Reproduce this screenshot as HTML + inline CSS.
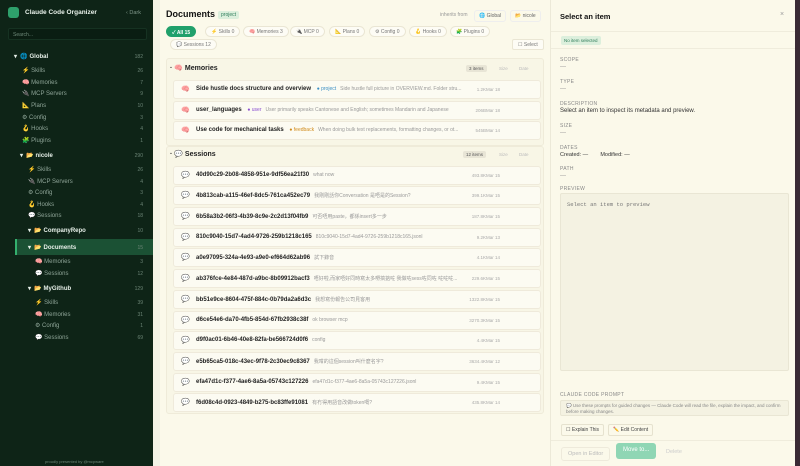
<!DOCTYPE html>
<html><head><meta charset="utf-8">
<style>
*{box-sizing:border-box;margin:0;padding:0}
body{width:800px;height:466px;overflow:hidden;background:#fbf9ea;font-family:"Liberation Sans","Noto Sans CJK SC",sans-serif;position:relative;color:#222}
.abs{position:absolute;white-space:nowrap}
#side{position:absolute;left:0;top:0;width:153px;height:466px;background:#0e2417}
#gap{position:absolute;left:153px;top:0;width:7px;height:466px;background:#f3f2e6}
.si{position:absolute;font-size:6px;color:#8fa598;white-space:nowrap}
.sc{position:absolute;right:10px;font-size:5px;color:#6c8576}
.sb{color:#e6efe8;font-weight:bold}
.row{position:absolute;left:173px;width:368px;height:19px;border:1px solid #efeadb;background:#fcfbf2;border-radius:3px}
.row .t{position:absolute;left:22px;top:5px;font-size:6px;font-weight:bold;color:#222;white-space:nowrap}
.row .i{position:absolute;left:7px;top:4px;font-size:7px;color:#888}
.row .m{position:absolute;right:54px;top:6px;font-size:4.5px;color:#aaa}
.row .d{position:absolute;right:40px;top:6px;font-size:4.5px;color:#aaa}
.d2{color:#999;font-weight:normal;font-size:5px;margin-left:4px}
.chip{position:absolute;top:26px;height:11px;border:1px solid #eae6d4;border-radius:6px;background:#fdfcf5;font-size:5px;color:#777;padding:2px 5px;white-space:nowrap}
.lab{position:absolute;left:560px;font-size:5px;color:#888;letter-spacing:.3px}
.val{position:absolute;left:560px;font-size:6px;color:#333}
</style></head><body>
<div id="side">
 <div class="abs" style="left:8px;top:7px;width:11px;height:11px;background:#2ea06b;border-radius:3px"></div>
 <div class="abs" style="left:25px;top:9px;font-size:6.5px;color:#e8f1ea;font-weight:bold">Claude Code Organizer</div>
 <div class="abs" style="left:126px;top:10px;font-size:5.5px;color:#7f978a">‹ Dark</div>
 <div class="abs" style="left:8px;top:28px;width:139px;height:12px;background:#0a1d12;border:1px solid #163222;border-radius:2px;font-size:5px;color:#6f8a7a;padding:3px 4px">Search...</div>
 <div class="si sb" style="left:14px;top:53px">▾ &nbsp;🌐 Global</div><div class="sc" style="top:54px">182</div>
 <div class="si" style="left:22px;top:67px">⚡ Skills</div><div class="sc" style="top:68px">26</div>
 <div class="si" style="left:22px;top:79px">🧠 Memories</div><div class="sc" style="top:80px">7</div>
 <div class="si" style="left:22px;top:90px">🔌 MCP Servers</div><div class="sc" style="top:91px">9</div>
 <div class="si" style="left:22px;top:102px">📐 Plans</div><div class="sc" style="top:103px">10</div>
 <div class="si" style="left:22px;top:114px">⚙ Config</div><div class="sc" style="top:115px">3</div>
 <div class="si" style="left:22px;top:125px">🪝 Hooks</div><div class="sc" style="top:126px">4</div>
 <div class="si" style="left:22px;top:137px">🧩 Plugins</div><div class="sc" style="top:138px">1</div>
 <div class="si sb" style="left:20px;top:152px">▾ &nbsp;📂 nicole</div><div class="sc" style="top:153px">290</div>
 <div class="si" style="left:28px;top:166px">⚡ Skills</div><div class="sc" style="top:167px">26</div>
 <div class="si" style="left:28px;top:178px">🔌 MCP Servers</div><div class="sc" style="top:179px">4</div>
 <div class="si" style="left:28px;top:189px">⚙ Config</div><div class="sc" style="top:190px">3</div>
 <div class="si" style="left:28px;top:201px">🪝 Hooks</div><div class="sc" style="top:202px">4</div>
 <div class="si" style="left:28px;top:212px">💬 Sessions</div><div class="sc" style="top:213px">18</div>
 <div class="si sb" style="left:28px;top:227px">▾ &nbsp;📂 CompanyRepo</div><div class="sc" style="top:228px">10</div>
 <div class="abs" style="left:15px;top:239px;width:138px;height:16px;background:#1b5134;border-left:2px solid #34b06e"></div>
 <div class="si sb" style="left:28px;top:244px">▾ &nbsp;📂 Documents</div><div class="sc" style="top:245px">15</div>
 <div class="si" style="left:35px;top:258px">🧠 Memories</div><div class="sc" style="top:259px">3</div>
 <div class="si" style="left:35px;top:270px">💬 Sessions</div><div class="sc" style="top:271px">12</div>
 <div class="si sb" style="left:28px;top:285px">▾ &nbsp;📂 MyGithub</div><div class="sc" style="top:286px">129</div>
 <div class="si" style="left:35px;top:299px">⚡ Skills</div><div class="sc" style="top:300px">39</div>
 <div class="si" style="left:35px;top:311px">🧠 Memories</div><div class="sc" style="top:312px">31</div>
 <div class="si" style="left:35px;top:322px">⚙ Config</div><div class="sc" style="top:323px">1</div>
 <div class="si" style="left:35px;top:334px">💬 Sessions</div><div class="sc" style="top:335px">69</div>
 <div class="abs" style="left:45px;top:459px;font-size:4px;color:#6c8576">proudly presented by @mcpware</div>
</div>
<div id="gap"></div>

<div class="abs" style="left:166px;top:9px;font-size:9px;font-weight:bold;color:#111">Documents</div>
<div class="abs" style="left:218px;top:11px;font-size:5px;color:#2f7d5a;background:#dcefdc;padding:1px 3px;border-radius:2px">project</div>
<div class="abs" style="left:440px;top:12px;font-size:5px;color:#999">inherits from</div>
<div class="abs" style="left:474px;top:10px;font-size:5px;color:#666;border:1px solid #eee;padding:2px 4px;border-radius:3px">🌐 Global</div>
<div class="abs" style="left:510px;top:10px;font-size:5px;color:#666;border:1px solid #eee;padding:2px 4px;border-radius:3px">📂 nicole</div>
<div class="chip" style="left:166px;background:#20a06b;color:#fff;border-color:#20a06b;font-weight:bold">✓ All 15</div>
<div class="chip" style="left:205px">⚡ Skills 0</div>
<div class="chip" style="left:243px">🧠 Memories 3</div>
<div class="chip" style="left:290px">🔌 MCP 0</div>
<div class="chip" style="left:329px">📐 Plans 0</div>
<div class="chip" style="left:369px">⚙ Config 0</div>
<div class="chip" style="left:409px">🪝 Hooks 0</div>
<div class="chip" style="left:450px">🧩 Plugins 0</div>
<div class="chip" style="left:170px;top:39px">💬 Sessions 12</div>
<div class="chip" style="left:512px;top:39px;border-radius:2px">☐ Select</div>

<div class="abs" style="left:166px;top:58px;width:378px;height:88px;background:#f8f6e6;border:1px solid #efebd9;border-radius:3px"></div>
<div class="abs" style="left:170px;top:64px;font-size:7px;font-weight:bold">· 🧠 Memories</div>
<div class="abs" style="left:466px;top:65px;font-size:4.5px;color:#555;background:#e8e5d6;padding:1px 3px;border-radius:2px">3 items</div>
<div class="abs" style="left:499px;top:66px;font-size:4.5px;color:#bbb">Size</div>
<div class="abs" style="left:519px;top:66px;font-size:4.5px;color:#bbb">Date</div>
<div class="row" style="top:80px"><span class="i">🧠</span><span class="t">Side hustle docs structure and overview <span class="d2" style="color:#3a8fc4">● project</span><span class="d2">Side hustle full picture in OVERVIEW.md. Folder stru...</span></span><span class="m">1.2K</span><span class="d">Mar 18</span></div>
<div class="row" style="top:101px"><span class="i">🧠</span><span class="t">user_languages <span class="d2" style="color:#8a4fd0">● user</span><span class="d2">User primarily speaks Cantonese and English; sometimes Mandarin and Japanese</span></span><span class="m">206B</span><span class="d">Mar 18</span></div>
<div class="row" style="top:121px"><span class="i">🧠</span><span class="t">Use code for mechanical tasks <span class="d2" style="color:#d08a1a">● feedback</span><span class="d2">When doing bulk text replacements, formatting changes, or ot...</span></span><span class="m">545B</span><span class="d">Mar 14</span></div>

<div class="abs" style="left:166px;top:146px;width:378px;height:268px;background:#f8f6e6;border:1px solid #efebd9;border-radius:3px"></div>
<div class="abs" style="left:170px;top:150px;font-size:7px;font-weight:bold">· 💬 Sessions</div>
<div class="abs" style="left:463px;top:151px;font-size:4.5px;color:#555;background:#e8e5d6;padding:1px 3px;border-radius:2px">12 items</div>
<div class="abs" style="left:499px;top:152px;font-size:4.5px;color:#bbb">Size</div>
<div class="abs" style="left:519px;top:152px;font-size:4.5px;color:#bbb">Date</div>
<div class="row" style="top:166px"><span class="i">💬</span><span class="t">40d90c29-2b08-4858-951e-9df56ea21f30<span class="d2">what now</span></span><span class="m">493.8K</span><span class="d">Mar 15</span></div>
<div class="row" style="top:186px"><span class="i">💬</span><span class="t">4b813cab-a115-46ef-8dc5-761ca452ec79<span class="d2">我剛剛話你Conversation 是唔是的Session?</span></span><span class="m">399.1K</span><span class="d">Mar 15</span></div>
<div class="row" style="top:207px"><span class="i">💬</span><span class="t">6b58a3b2-06f3-4b39-8c9e-2c2d13f04fb9<span class="d2">可否唔用paste，都係insert多一步</span></span><span class="m">187.8K</span><span class="d">Mar 15</span></div>
<div class="row" style="top:228px"><span class="i">💬</span><span class="t">810c9040-15d7-4ad4-9726-259b1218c165<span class="d2">810c9040-15d7-4ad4-9726-259b1218c165.jsonl</span></span><span class="m">9.2K</span><span class="d">Mar 13</span></div>
<div class="row" style="top:248px"><span class="i">💬</span><span class="t">a0e97095-324a-4e93-a9e0-ef664d62ab96<span class="d2">試下錄音</span></span><span class="m">4.1K</span><span class="d">Mar 14</span></div>
<div class="row" style="top:269px"><span class="i">💬</span><span class="t">ab376fce-4e84-487d-a9bc-8b09912bacf3<span class="d2">唔好啦,而家唔好同時寫太多嘢搞掂咗 我做咗sess咗同咗 咗咗咗...</span></span><span class="m">229.6K</span><span class="d">Mar 15</span></div>
<div class="row" style="top:290px"><span class="i">💬</span><span class="t">bb51e9ce-8604-475f-884c-0b79da2a6d3c<span class="d2">我想寫份報告公司見客用</span></span><span class="m">1322.8K</span><span class="d">Mar 15</span></div>
<div class="row" style="top:311px"><span class="i">💬</span><span class="t">d6ce54e6-da70-4fb5-854d-67fb2938c38f<span class="d2">ok browser mcp</span></span><span class="m">3270.3K</span><span class="d">Mar 15</span></div>
<div class="row" style="top:331px"><span class="i">💬</span><span class="t">d9f0ac01-6b46-40e8-82fa-be566724d0f6<span class="d2">config</span></span><span class="m">4.4K</span><span class="d">Mar 15</span></div>
<div class="row" style="top:352px"><span class="i">💬</span><span class="t">e5b65ca5-018c-43ec-9f78-2c30ec9c8367<span class="d2">我咁的這個session叫什麼名字?</span></span><span class="m">3634.4K</span><span class="d">Mar 12</span></div>
<div class="row" style="top:373px"><span class="i">💬</span><span class="t">efa47d1c-f377-4ae6-8a5a-05743c127226<span class="d2">efa47d1c-f377-4ae6-8a5a-05743c127226.jsonl</span></span><span class="m">9.4K</span><span class="d">Mar 15</span></div>
<div class="row" style="top:393px"><span class="i">💬</span><span class="t">f6d08c4d-0923-4849-b275-bc83ffe91081<span class="d2">有冇得用語音改做token嘅?</span></span><span class="m">435.8K</span><span class="d">Mar 14</span></div>

<div class="abs" style="left:550px;top:0;width:1px;height:466px;background:#ece9d8"></div>
<div class="abs" style="left:795px;top:0;width:5px;height:466px;background:#3a2a34"></div>
<div class="abs" style="left:560px;top:12px;font-size:7.5px;font-weight:bold;color:#111">Select an item</div>
<div class="abs" style="left:780px;top:11px;font-size:7px;color:#999">×</div>
<div class="abs" style="left:551px;top:31px;width:244px;height:1px;background:#efecdc"></div>
<div class="abs" style="left:561px;top:36px;font-size:4.5px;color:#2f7d5a;background:#dcefdc;padding:2px 3px;border-radius:2px">No item selected</div>
<div class="abs" style="left:551px;top:48px;width:244px;height:1px;background:#efecdc"></div>
<div class="lab" style="top:57px">SCOPE</div><div class="val" style="top:64px;color:#999">—</div>
<div class="lab" style="top:79px">TYPE</div><div class="val" style="top:86px;color:#999">—</div>
<div class="lab" style="top:101px">DESCRIPTION</div><div class="val" style="top:108px">Select an item to inspect its metadata and preview.</div>
<div class="lab" style="top:123px">SIZE</div><div class="val" style="top:130px;color:#999">—</div>
<div class="lab" style="top:145px">DATES</div><div class="val" style="top:152px;font-size:5.5px">Created: — &nbsp;&nbsp;&nbsp;&nbsp;&nbsp;&nbsp; Modified: —</div>
<div class="lab" style="top:166px">PATH</div><div class="val" style="top:173px;color:#999">—</div>
<div class="lab" style="top:186px">PREVIEW</div>
<div class="abs" style="left:560px;top:193px;width:229px;height:178px;background:#f4f2e2;border:1px solid #e9e6d4;border-radius:2px;font-family:'Liberation Mono',monospace;font-size:5.5px;color:#777;padding:7px 6px">Select an item to preview</div>
<div class="lab" style="top:392px">CLAUDE CODE PROMPT</div>
<div class="abs" style="left:560px;top:400px;width:229px;height:16px;background:#f4f2e2;border:1px solid #e9e6d4;border-radius:2px;font-size:4.5px;color:#888;padding:2px 5px;white-space:normal;line-height:6px">💬 Use these prompts for guided changes — Claude Code will read the file, explain the impact, and confirm before making changes.</div>
<div class="abs" style="left:561px;top:424px;font-size:5px;color:#444;border:1px solid #e6e2cf;padding:2px 4px;border-radius:2px">☐ Explain This</div>
<div class="abs" style="left:608px;top:424px;font-size:5px;color:#444;border:1px solid #e6e2cf;padding:2px 4px;border-radius:2px">✏️ Edit Content</div>
<div class="abs" style="left:551px;top:440px;width:244px;height:1px;background:#efecdc"></div>
<div class="abs" style="left:561px;top:447px;font-size:5.5px;color:#bbb;border:1px solid #eeeadb;padding:3px 6px;border-radius:3px">Open in Editor</div>
<div class="abs" style="left:616px;top:443px;width:40px;height:16px;background:#8fd6b4;border-radius:3px;font-size:6px;color:#fff;padding:4px 7px">Move to...</div>
<div class="abs" style="left:666px;top:449px;font-size:5.5px;color:#ccc">Delete</div>
</body></html>
